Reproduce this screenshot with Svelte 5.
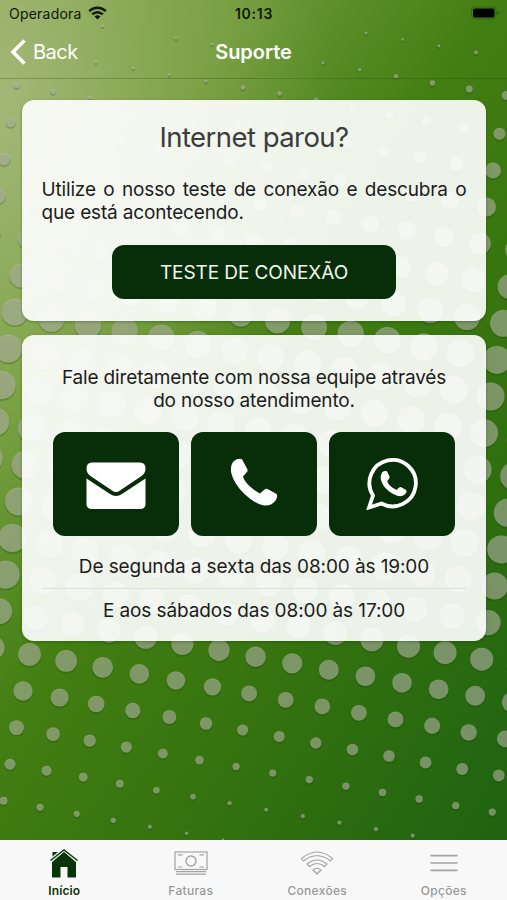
<style>
:global(body) {
    margin: 0;
}

.screen {
    position: relative;
    display: flex;
    flex-direction: column;
    width: 507px;
    height: 900px;
    overflow: hidden;
    font-family: Inter, "Liberation Sans", sans-serif;
    color: #1c1c1c;
    background:
        radial-gradient(ellipse 330px 520px at 0px 110px, rgba(190, 200, 150, 0.62), rgba(170, 190, 110, 0.32) 55%, rgba(150, 180, 80, 0) 100%),
        linear-gradient(124deg, #7c9f4a 0%, #6c9838 22%, #427e12 45%, #37740f 64%, #1d6211 98%);
}

.dots {
    position: absolute;
    left: 0;
    top: 0;
    width: 507px;
    height: 840px;
}

.dot {
    fill: #c0bdb2;
    fill-opacity: 0.55;
}

.dot-shadow {
    fill: #143c00;
    fill-opacity: 0.22;
}

.status, .navbar, .content, .tabs {
    position: relative;
}

.status {
    display: grid;
    grid-template-columns: 1fr 1fr 1fr;
    align-items: center;
    height: 26px;
    padding: 0 8px 0 9px;
    box-sizing: border-box;
    font-size: 14px;
    color: #10180a;
}

.carrier {
    display: flex;
    align-items: center;
    gap: 6px;
    letter-spacing: 0.22px;
}

.clock {
    text-align: center;
    font-weight: 600;
    letter-spacing: 0.75px;
}

.battery {
    justify-self: end;
}

.navbar {
    display: grid;
    grid-template-columns: 1fr 1fr 1fr;
    align-items: center;
    height: 53px;
    box-sizing: border-box;
    padding: 0 10px;
    border-bottom: 1px solid rgba(40, 70, 10, 0.28);
    color: #fff;
    font-size: 20px;
}

.back {
    display: flex;
    align-items: center;
    gap: 6px;
    padding: 0;
    border: none;
    background: none;
    color: #fff;
    font: inherit;
    letter-spacing: -0.5px;
}

.title {
    margin: 0;
    text-align: center;
    font-size: 20px;
    font-weight: 600;
    letter-spacing: -0.05px;
}

.content {
    flex: 1;
    display: flex;
    flex-direction: column;
    gap: 14px;
    padding: 21px 21px 0 22px;
}

.card {
    box-sizing: border-box;
    padding: 0 19.5px;
    border-radius: 12px;
    background-color: rgba(255, 255, 255, 0.91);
    box-shadow: 0 1px 3px rgba(20, 50, 0, 0.35);
    font-size: 19px;
    line-height: 23px;
}

.card-test {
    height: 221px;
}

.card-contact {
    height: 306px;
    text-align: center;
}

.card h2 {
    margin: 0;
    padding-top: 20px;
    text-align: center;
    font-size: 27.5px;
    line-height: 34px;
    font-weight: 400;
    letter-spacing: -0.55px;
    color: #3c3c3c;
}

.card p {
    margin: 0;
}

.lead {
    padding-top: 24px;
    text-align: justify;
    letter-spacing: -0.16px;
}

.test-button {
    display: block;
    width: 284px;
    height: 54px;
    margin: 20.5px auto 0;
    padding: 2px 0 0;
    border: none;
    border-radius: 12px;
    background-color: #082e09;
    color: #f0f6ee;
    font: inherit;
    letter-spacing: -0.08px;
}

.team {
    padding-top: 31px;
    letter-spacing: -0.15px;
}

.channels {
    display: flex;
    justify-content: center;
    gap: 12px;
    margin-top: 19.5px;
}

.channel {
    display: flex;
    align-items: center;
    justify-content: center;
    width: 126px;
    height: 104px;
    padding: 0;
    border: none;
    border-radius: 12px;
    background-color: #082e09;
}

.channel-mail {
    padding-top: 4px;
}

.channel-phone {
    padding-bottom: 4px;
}

.hours {
    letter-spacing: -0.1px;
    padding: 19.5px 0 10px;
}

.hours + .hours {
    padding-top: 10px;
    border-top: 1px solid #dbe2d8;
}

.tabs {
    display: grid;
    grid-template-columns: repeat(4, 1fr);
    height: 60px;
    padding-left: 1px;
    box-sizing: border-box;
    background-color: #f8f8f8;
}

.tab {
    display: flex;
    flex-direction: column;
    align-items: center;
    padding: 7px 0 0;
    border: none;
    background: none;
    color: #999;
    font: inherit;
    font-size: 12px;
    line-height: 16px;
    font-weight: 500;
    letter-spacing: 0.3px;
}

.tab svg {
    margin-bottom: 4px;
}

.tab.active {
    color: #0a3509;
    font-weight: 600;
    letter-spacing: 0.1px;
}
</style>

<main class="screen">
    <svg class="dots" viewBox="0 0 507 840">
        {#each dots as dot}
            <circle class="dot-shadow" cx={dot.x} cy={dot.y + 1.5} r={dot.r + 0.3} />
            <circle class="dot" cx={dot.x} cy={dot.y} r={dot.r} />
        {/each}
    </svg>

    <div class="status">
        <div class="carrier">
            <span>Operadora</span>
            <svg width="19" height="14" viewBox="0 0 19 14" fill="none" stroke="#10180a" stroke-width="2.5">
                <path d="M1.2 5.2a11.7 11.7 0 0 1 16.6 0" />
                <path d="M4.2 8.4a7.5 7.5 0 0 1 10.6 0" />
                <path d="M9.5 13.6L6.5 10.6a4.3 4.3 0 0 1 6 0z" fill="#10180a" stroke="none" />
            </svg>
        </div>
        <div class="clock">10:13</div>
        <svg class="battery" width="28" height="14" viewBox="0 0 28 14">
            <rect x="0.5" y="1" width="24.5" height="12" rx="3.5" fill="none" stroke="#224a0b" stroke-opacity="0.5" />
            <rect x="2" y="2.5" width="21.5" height="9" rx="2" fill="#000" />
            <path d="M26.2 5v4q1.6-.6 1.6-2t-1.6-2z" fill="#224a0b" fill-opacity="0.7" />
        </svg>
    </div>

    <header class="navbar">
        <button class="back">
            <svg width="17" height="26" viewBox="0 0 17 26" fill="none" stroke="#fff" stroke-width="3.6">
                <path d="M14.5 1.5L3 13l11.5 11.5" />
            </svg>
            Back
        </button>
        <h1 class="title">Suporte</h1>
    </header>

    <div class="content">
        <section class="card card-test">
            <h2>Internet parou?</h2>
            <p class="lead">Utilize o nosso teste de conexão e descubra o que está acontecendo.</p>
            <button class="test-button">TESTE DE CONEXÃO</button>
        </section>

        <section class="card card-contact">
            <p class="team">Fale diretamente com nossa equipe através<br />do nosso atendimento.</p>
            <div class="channels">
                <button class="channel channel-mail" aria-label="E-mail">
                    <svg width="60" height="48" viewBox="0 0 60 48" fill="#fff">
                        <path d="M6 0.5h48q5.5 0 5.5 6q0 4.5-4 7.5L34 28.5q-4 3-8 0L4.5 14Q0.5 11 0.5 6.5q0-6 5.5-6z" />
                        <path d="M0.5 16.5L24 32q6 4 12 0l23.5-15.5V42q0 5-5.5 5H6q-5.5 0-5.5-5z" />
                    </svg>
                </button>
                <button class="channel channel-phone" aria-label="Telefone">
                    <svg width="48" height="48" viewBox="0 0 48 48" fill="#fff">
                        <path d="M4 3Q8 0 12 1.2L17.5 11.5Q18 13 16.5 14.5L13 18.5Q14 23 20 28.5Q25.5 33.5 30 35.5L34.500 31.500Q36 30.500 37.500 31L46.500 36Q48 38 46 42Q42 48 34 47.500Q25 46 14.500 36Q3.500 25.500 1 14Q0.500 6 4 3z" />
                    </svg>
                </button>
                <button class="channel" aria-label="WhatsApp">
                    <svg width="52" height="52" viewBox="0 0 52 52">
                        <path d="M3 49.5L7 37.5A23.2 23.2 0 1 1 15.5 45.5z" fill="none" stroke="#fff" stroke-width="3.8" />
                        <path d="M16 14.5q2.5-2 5-1.2l2.7 5.7q0 1.5-2.5 4q1.5 5.5 9.5 9q2.5-3.3 4-3l5.500 3q1 1.500-.5 3.500q-3.200 4-9 2q-8-3-13-9.500q-5-7.500-1.700-13.500z" fill="#fff" />
                    </svg>
                </button>
            </div>
            <p class="hours">De segunda a sexta das 08:00 às 19:00</p>
            <p class="hours">E aos sábados das 08:00 às 17:00</p>
        </section>
    </div>

    <nav class="tabs">
        <button class="tab active">
            <svg width="34" height="32" viewBox="0 0 34 32">
                <path d="M5.5 5h5v5l-5 4z" fill="#0a3509" />
                <path d="M5 15L17 4.5 29 15v15.5h-8.5V20h-7v10.5H5z" fill="#0a3509" />
                <path d="M3.5 13.5L17 2.5l13.5 11" fill="none" stroke="#f8f8f8" stroke-width="3.6" />
                <path d="M3.5 13.5L17 3l13.5 10.5" fill="none" stroke="#0a3509" stroke-width="1.5" />
            </svg>
            Início
        </button>
        <button class="tab">
            <svg width="34" height="32" viewBox="0 0 34 32" fill="none" stroke="#a3a3a3" stroke-width="1.2">
                <rect x="1" y="5" width="32" height="17.5" />
                <circle cx="17" cy="14" r="5" stroke-width="1.4" />
                <path d="M4 7.8h4.5M25.5 7.8H30M4 20h4.5M25.5 20H30M2 24.7h30M2 27.2h30" />
            </svg>
            Faturas
        </button>
        <button class="tab">
            <svg width="34" height="32" viewBox="0 0 34 32" fill="none" stroke="#a3a3a3" stroke-width="1.2" stroke-linejoin="round">
                <path d="M1.5 11.5Q17-1.5 32.5 11.5L30.5 14Q17 3.5 3.5 14z" />
                <path d="M7.2 17Q17 9 26.8 17L24.5 19.5Q17 13.5 9.5 19.5z" />
                <path d="M13 23q4-3.500 8 0l-4 4z" />
            </svg>
            Conexões
        </button>
        <button class="tab">
            <svg width="34" height="32" viewBox="0 0 34 32" fill="none" stroke="#a3a3a3" stroke-width="1.6">
                <path d="M3.5 8.6h27M3.5 16h27M3.5 23.4h27" />
            </svg>
            Opções
        </button>
    </nav>
</main>

<script>

// Radius of the halftone dots by height, as [y, r], at three columns
const columns = [
    { x: 20, stops: [[100, 3.3], [122, 4.7], [158, 6.3], [194, 8], [238, 10], [275, 12], [311, 13.3], [348, 14], [574, 14], [610, 12.8], [654, 11.5], [691, 9.7], [727, 7.5], [764, 5.5], [801, 4], [840, 2.5]] },
    { x: 250, stops: [[100, 2.2], [150, 4], [210, 6.5], [270, 10], [320, 12.5], [350, 13.5], [560, 13.5], [610, 12.5], [656, 10.3], [693, 8], [730, 5.5], [766, 3.6], [803, 2], [840, 1.2]] },
    { x: 500, stops: [[95, 4.5], [132, 6], [169, 8], [205, 9.7], [242, 11], [285, 12.4], [321, 13.5], [359, 14], [560, 14], [585, 13.5], [621, 12.6], [658, 11.7], [695, 10.2], [738, 8.4], [775, 6], [812, 3.7], [840, 2.3]] }
];

// The sparse dots near the top edge
const strays = [
    [102.5, 26, 1.3], [176, 38, 1.6], [212, 44, 1.5],
    [366, 33, 1.6], [402.5, 39.5, 1.3], [439, 46, 1.4], [476, 52.5, 2],
    [96, 62, 1.4], [133, 68, 1.5], [169.5, 74.6, 1.5], [206, 81, 1.6], [243, 87.5, 2.2], [279.5, 93.5, 2.3],
    [323, 63, 1.4], [359.6, 69.7, 1.6], [396, 76.3, 2.2], [432.5, 83, 2.7], [469.3, 89, 3.4], [506, 95.5, 4.4],
    [16.6, 85.5, 2.8], [53, 91.5, 2.5], [89.6, 97.5, 2], [316, 99.5, 2]
];

function radiusAt(stops, y) {
    const next = stops.findIndex((s) => s[0] >= y);
    if (next === -1) return stops[stops.length - 1][1];
    if (next === 0) return stops[0][1];
    const [y0, r0] = stops[next - 1];
    const [y1, r1] = stops[next];
    return r0 + (r1 - r0) * (y - y0) / (y1 - y0);
}

function radius(x, y) {
    const [left, right] = x < 250 ? [columns[0], columns[1]] : [columns[1], columns[2]];
    const t = Math.max(0, (x - left.x) / (right.x - left.x));
    return radiusAt(left.stops, y) * (1 - t) + radiusAt(right.stops, y) * t;
}

function buildDots() {
    const list = strays.map(([x, y, r]) => ({ x, y, r }));
    for (let i = -6; i < 20; i++) {
        for (let j = -22; j < 8; j++) {
            const x = 23 + i * 36.6 - j * 6.5;
            const y = 691 + i * 6.5 + j * 36.6;
            if (x < -15 || x > 522 || y < 103 || y > 845) continue;
            list.push({ x, y, r: radius(x, y) });
        }
    }
    return list;
}

const dots = buildDots();
</script>
